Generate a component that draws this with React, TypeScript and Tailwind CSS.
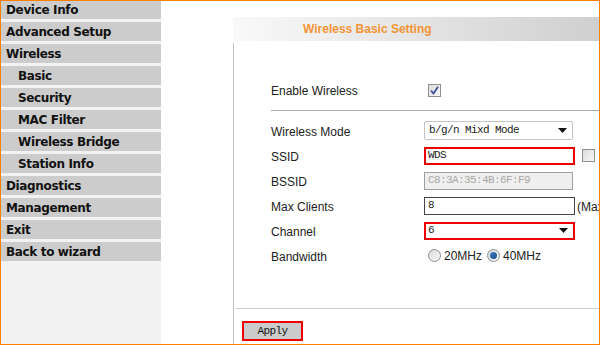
import { ReactNode } from "react";

const menu = [
  { label: "Device Info", sub: false },
  { label: "Advanced Setup", sub: false },
  { label: "Wireless", sub: false },
  { label: "Basic", sub: true },
  { label: "Security", sub: true },
  { label: "MAC Filter", sub: true },
  { label: "Wireless Bridge", sub: true },
  { label: "Station Info", sub: true },
  { label: "Diagnostics", sub: false },
  { label: "Management", sub: false },
  { label: "Exit", sub: false },
  { label: "Back to wizard", sub: false },
];

const mono = "font-['Liberation_Mono',monospace] text-[11px] tracking-[-0.6px]";

function Checkbox({ checked }: { checked?: boolean }) {
  return (
    <span className="flex h-[13px] w-[13px] items-center justify-center border border-[#8e8f8f] bg-gradient-to-br from-[#dcdcdc] to-[#f8f8f8]">
      {checked && (
        <svg width="9" height="9" viewBox="0 0 9 9">
          <path d="M1 4.5 L3.5 7.5 L8 0.8" fill="none" stroke="#3c4f9c" strokeWidth="1.8" />
        </svg>
      )}
    </span>
  );
}

function Radio({ checked }: { checked?: boolean }) {
  return (
    <span className="flex h-[13px] w-[13px] items-center justify-center rounded-full border border-[#8e8f8f] bg-gradient-to-br from-[#d8d8d8] to-[#fafafa]">
      {checked && <span className="h-[7px] w-[7px] rounded-full bg-gradient-to-br from-[#3e7fc0] to-[#1e4f8c]" />}
    </span>
  );
}

function Arrow() {
  return (
    <svg width="9" height="5" viewBox="0 0 9 5" className="mr-[5px]">
      <path d="M0 0 H9 L4.5 5 Z" fill="#111" />
    </svg>
  );
}

function Row({ label, children }: { label: string; children: ReactNode }) {
  return (
    <div className="flex h-[25px] items-center">
      <div className="w-[153px] shrink-0 pt-[3px]">{label}</div>
      <div className="flex items-center">{children}</div>
    </div>
  );
}

export default function App() {
  return (
    <div className="flex h-[345px] w-[600px] overflow-hidden border border-[#ff8000] bg-white font-['Liberation_Sans',Arial,sans-serif] text-[12px] text-[#222]">
      <div className="flex w-[160px] shrink-0 flex-col gap-[3px] bg-[#f2f2f2]">
        {menu.map((m, i) => (
          <div
            key={m.label}
            className={`flex items-center bg-[#cccccc] font-['DejaVu_Sans',sans-serif] text-[12px] font-bold tracking-[-0.35px] text-[#111] ${
              i === 0 ? "h-[18px]" : "h-[19px]"
            } ${m.sub ? "pl-[17px]" : "pl-[5px]"}`}
          >
            {m.label}
          </div>
        ))}
      </div>

      <div className="flex flex-1 flex-col pl-[72px] pt-[16px]">
        <div className="flex h-[24px] items-center bg-gradient-to-r from-[#f9f9f9] to-[#cfcfcf] pl-[70px] text-[12px] font-bold text-[#f39436]">
          Wireless Basic Setting
        </div>
        <div className="mt-[2px] flex flex-1 flex-col border-l border-[#c4c4c4]">
          <div className="pl-[37px]">
            <div className="mt-[36px] flex h-[22px] items-center">
              <div className="w-[157px] shrink-0 pt-[2px]">Enable Wireless</div>
              <Checkbox checked />
            </div>
            <div className="mt-[9px] h-px bg-[#a9a9a9]" />
            <div className="pt-[7px]">
              <Row label="Wireless Mode">
                <div className={`flex h-[19px] w-[149px] items-center justify-between rounded-[2px] border border-[#c3c3c3] bg-white pl-[4px] ${mono}`}>
                  b/g/n Mixd Mode
                  <Arrow />
                </div>
              </Row>
              <Row label="SSID">
                <div className={`flex h-[18px] w-[151px] items-center border-2 border-[#ee0000] pl-[2px] ${mono}`}>WDS</div>
                <span className="ml-[7px]">
                  <Checkbox />
                </span>
              </Row>
              <Row label="BSSID">
                <div className={`flex h-[18px] w-[149px] items-center border border-[#a0a0a0] bg-[#efefef] pl-[3px] text-[#a8a8a8] ${mono}`}>
                  C8:3A:35:4B:6F:F9
                </div>
              </Row>
              <Row label="Max Clients">
                <div className={`flex h-[18px] w-[151px] items-center border border-[#444] pl-[3px] ${mono}`}>8</div>
                <span className="ml-[2px] whitespace-nowrap pt-[2px]">(Max</span>
              </Row>
              <Row label="Channel">
                <div className={`flex h-[18px] w-[151px] items-center justify-between border-2 border-[#ee0000] pl-[2px] ${mono}`}>
                  6
                  <Arrow />
                </div>
              </Row>
              <Row label="Bandwidth">
                <span className="ml-[4px]">
                  <Radio />
                </span>
                <span className="ml-[3px]">20MHz</span>
                <span className="ml-[5px]">
                  <Radio checked />
                </span>
                <span className="ml-[3px]">40MHz</span>
              </Row>
            </div>
          </div>
          <div className="ml-[2px] mt-[40px] h-px bg-[#cccccc]" />
          <div className="pl-[8px] pt-[12px]">
            <div className={`flex h-[20px] w-[61px] items-center justify-center border-2 border-[#ee0000] bg-[#cbcbcb] text-[#111] ${mono}`}>
              Apply
            </div>
          </div>
        </div>
      </div>
    </div>
  );
}
